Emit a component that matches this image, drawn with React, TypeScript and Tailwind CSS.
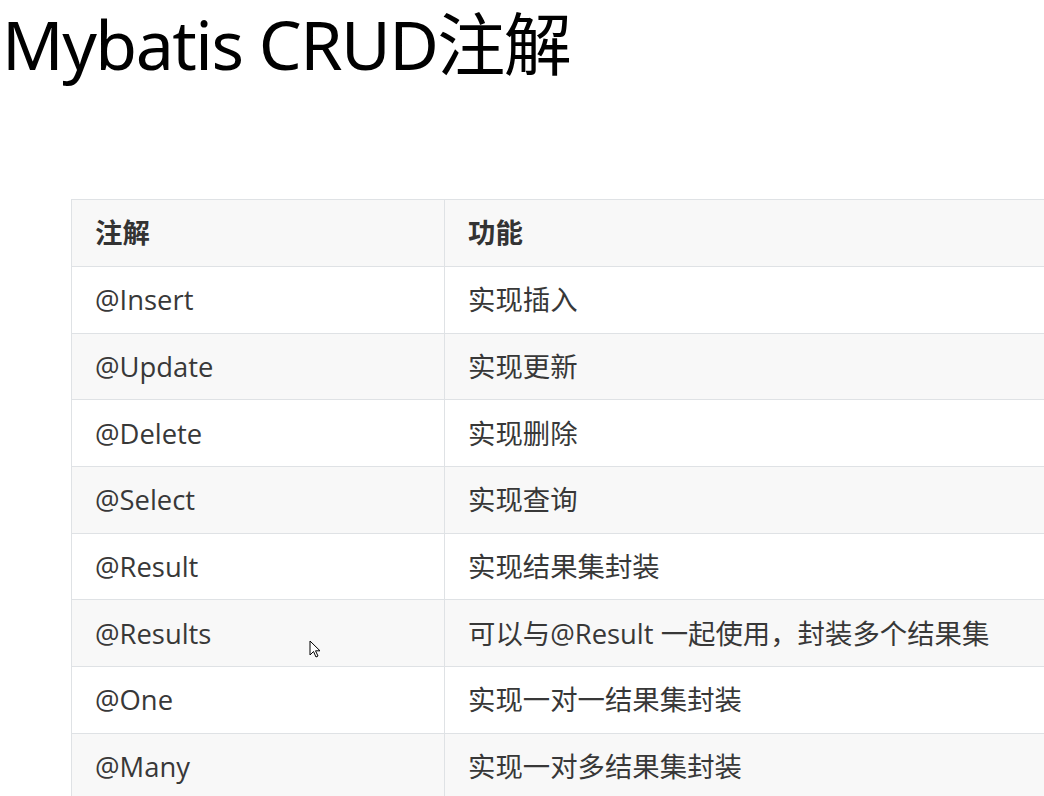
import React from "react";

const rows: [string, string][] = [
  ["@Insert", "实现插入"],
  ["@Update", "实现更新"],
  ["@Delete", "实现删除"],
  ["@Select", "实现查询"],
  ["@Result", "实现结果集封装"],
  ["@Results", "可以与@Result 一起使用，封装多个结果集"],
  ["@One", "实现一对一结果集封装"],
  ["@Many", "实现一对多结果集封装"],
];

export default function App() {
  return (
    <div className="relative w-[1044px] h-[796px] overflow-hidden bg-white">
      <h1
        className="pl-[2px] pt-[4px] text-[68px] leading-[80px] tracking-[-1.5px] text-black font-normal whitespace-nowrap"
        style={{ fontFamily: '"Noto Sans", "Noto Sans CJK SC", sans-serif' }}
      >
        Mybatis CRUD注解
      </h1>
      <div className="pl-[71px] pt-[115px]">
        <table
          className="w-[1100px] border-collapse text-[27.4px] text-[#383838]"
          style={{ fontFamily: '"Open Sans", "Noto Sans CJK SC", sans-serif' }}
        >
          <thead>
            <tr className="bg-[#f8f8f8] h-[67px]">
              <th className="w-[373px] border border-[#dfe2e5] pl-[23px] text-left font-bold text-[#333]">注解</th>
              <th className="border border-[#dfe2e5] pl-[23px] text-left font-bold text-[#333]">功能</th>
            </tr>
          </thead>
          <tbody>
            {rows.map(([a, b], i) => (
              <tr key={a} className={`h-[66.7px] ${i % 2 === 1 ? "bg-[#f8f8f8]" : "bg-white"}`}>
                <td className="border border-[#dfe2e5] pl-[23px]">{a}</td>
                <td className="border border-[#dfe2e5] pl-[23px]">{b}</td>
              </tr>
            ))}
          </tbody>
        </table>
      </div>
      <svg className="absolute left-[309px] top-[640px]" width="12" height="19" viewBox="0 0 12 19">
        <path d="M1 1 L1 15 L4.5 11.5 L7 17 L9 16 L6.5 10.8 L11 10.8 Z" fill="white" stroke="black" strokeWidth="1" strokeLinejoin="round" />
      </svg>
    </div>
  );
}
